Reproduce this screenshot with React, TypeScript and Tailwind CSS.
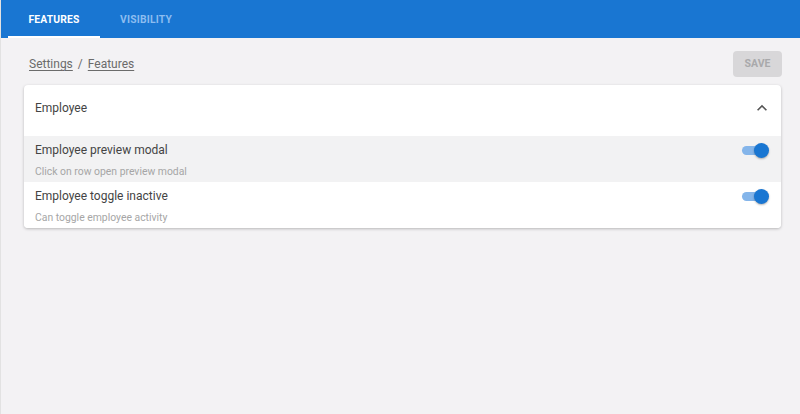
import React from "react";

function Toggle() {
  return (
    <div className="relative w-[27px] h-[16px] flex items-center">
      <div className="absolute left-0 w-[22px] h-[9px] rounded-full bg-[#84b5ea]" />
      <div className="absolute left-[12px] w-[15px] h-[15px] rounded-full bg-[#1976d2] shadow-[0_1px_2px_rgba(0,0,0,0.3)]" />
    </div>
  );
}

function Row({ title, sub, shaded }: { title: string; sub: string; shaded?: boolean }) {
  return (
    <div className={`flex items-start justify-between pl-[11px] pr-[12px] h-[46px] pt-[7px] ${shaded ? "bg-[#f2f2f3]" : "bg-white"}`}>
      <div className="flex flex-col">
        <span className="text-[12px] leading-[14px] text-[#444444]">{title}</span>
        <span className="text-[10.4px] leading-[13px] text-[#a6a6a6] mt-[8px]">{sub}</span>
      </div>
      <div className="mt-[-1px]">
        <Toggle />
      </div>
    </div>
  );
}

export default function App() {
  return (
    <div className="w-[800px] h-[414px] bg-[#f3f2f4] border-l border-[#e2e2e2] flex flex-col" style={{ fontFamily: "Roboto, 'Noto Sans', sans-serif" }}>
      <div className="h-[38px] bg-[#1976d2] flex items-stretch pl-[7px]">
        <div className="w-[92px] flex items-center justify-center relative text-[10.3px] font-bold tracking-[0.2px] text-white pt-[2px]">
          FEATURES
          <div className="absolute bottom-0 left-0 right-0 h-[2px] bg-white" />
        </div>
        <div className="w-[92px] flex items-center justify-center text-[10.3px] font-bold tracking-[0.2px] text-[#8cbdf0] pt-[2px]">
          VISIBILITY
        </div>
      </div>
      <div className="flex items-center justify-between pl-[28px] pr-[18px] mt-[13px] h-[26px]">
        <div className="text-[12px] text-[#6b6b6b] flex items-center gap-[5px]">
          <span className="underline underline-offset-2">Settings</span>
          <span>/</span>
          <span className="underline underline-offset-2">Features</span>
        </div>
        <div className="w-[49px] h-[26px] rounded-[4px] bg-[#d8d7d9] text-[#a9a9ab] text-[10.5px] font-bold flex items-center justify-center">
          SAVE
        </div>
      </div>
      <div className="ml-[23px] mr-[19px] mt-[8px] bg-white rounded-[4px] shadow-[0_1px_3px_rgba(0,0,0,0.25)] overflow-hidden">
        <div className="h-[51px] flex items-center justify-between pl-[11px] pr-[9px] pb-[5px]">
          <span className="text-[12px] text-[#444444]">Employee</span>
          <svg width="20" height="20" viewBox="0 0 24 24" className="text-[#555]">
            <path d="M7.41 15.41 12 10.83l4.59 4.58L18 14l-6-6-6 6z" fill="currentColor" />
          </svg>
        </div>
        <Row title="Employee preview modal" sub="Click on row open preview modal" shaded />
        <Row title="Employee toggle inactive" sub="Can toggle employee activity" />
      </div>
    </div>
  );
}
